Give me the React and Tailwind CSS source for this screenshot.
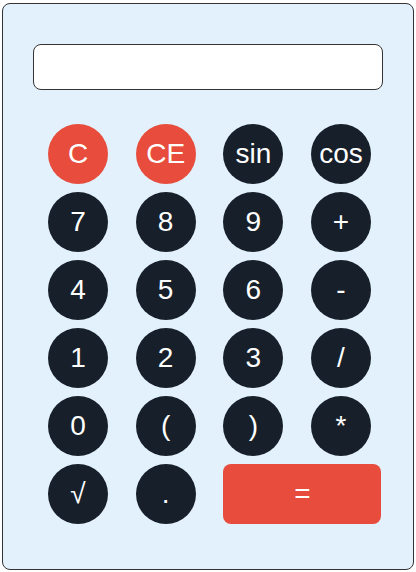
export default function App() {
    const rows = [
        ['C', 'CE', 'sin', 'cos'],
        ['7', '8', '9', '+'],
        ['4', '5', '6', '-'],
        ['1', '2', '3', '/'],
        ['0', '(', ')', '*'],
        ['√', '.'],
    ];

    return (
        <div className="w-[416px] h-[572px] pl-[2px] pr-[2px] pt-[3px] font-['Liberation_Sans',Arial,sans-serif]">
            <div className="h-[567px] bg-[#e3f1fc] border border-[#333] rounded-[8px] px-[30px] pt-[40px]">
                <div className="h-[46px] bg-white border border-[#333] rounded-[8px]" />

                <div className="mt-[34px] ml-[15px] grid grid-cols-[repeat(4,70px)] gap-x-[17.67px] gap-y-[8px]">
                    {rows.flat().map((key) => (
                        <button
                            key={key}
                            className={`w-[60px] h-[60px] rounded-full flex items-center justify-center text-white text-[28px] ${key === 'C' || key === 'CE' ? 'bg-[#e74c3c]' : 'bg-[#17202a]'}`}
                        >
                            {key}
                        </button>
                    ))}
                    <button className="col-span-2 w-[158px] h-[60px] rounded-[8px] bg-[#e74c3c] text-white text-[28px] flex items-center justify-center">
                        =
                    </button>
                </div>
            </div>
        </div>
    );
}
